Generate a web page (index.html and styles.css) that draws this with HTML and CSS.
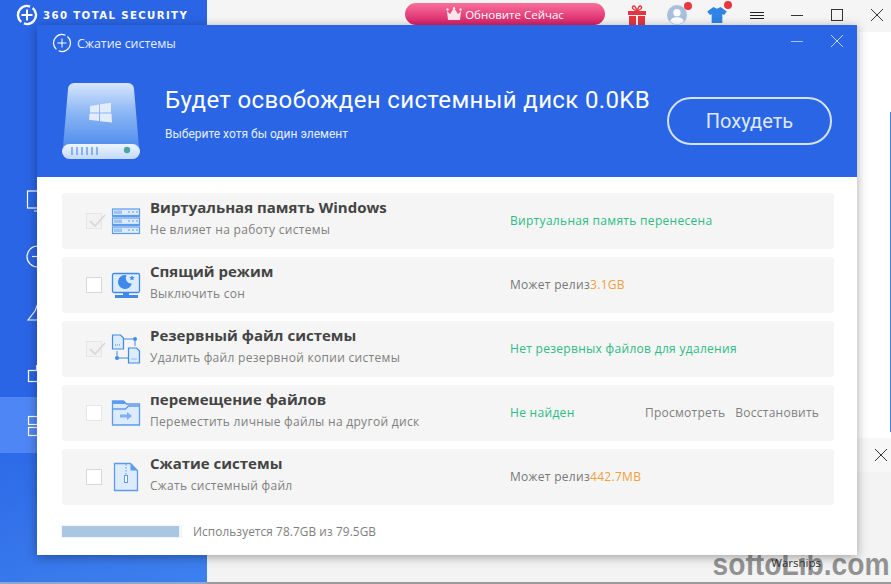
FILE: index.html
```html
<!DOCTYPE html>
<html lang="ru">
<head>
<meta charset="utf-8">
<title>360 Total Security</title>
<link rel="stylesheet" href="styles.css">
</head>
<body>
<div class="app">
  <aside class="side">
    <div class="brand">
      <svg class="brand-logo" width="24" height="24" viewBox="0 0 24 24"><circle cx="12" cy="12" r="9" fill="none" stroke="#fff" stroke-width="2.400" stroke-dasharray="25 3 25 3" transform="rotate(-50 12 12)"/><path d="M12 6.500v11M6.500 12h11" stroke="#fff" stroke-width="2"/></svg>
      <span class="brand-name">360 TOTAL SECURITY</span>
    </div>
    <nav class="nav">
      <div class="nav-item"><svg width="30" height="30" viewBox="0 0 30 30" fill="none" stroke="#fff" stroke-width="1.200"><rect x="1.500" y="3" width="24" height="17"/><path d="M13 20v3M8 23h12"/></svg></div>
      <div class="nav-item"><svg width="30" height="30" viewBox="0 0 30 30" fill="none" stroke="#fff" stroke-width="1.200"><circle cx="11.500" cy="12.500" r="10.500"/><path d="M6 12.500h8"/></svg></div>
      <div class="nav-item"><svg width="30" height="30" viewBox="0 0 30 30" fill="none" stroke="#fff" stroke-width="1.200"><path d="M2 20l7-9 3-8h6l3 8 4 9zM2 20h24"/></svg></div>
      <div class="nav-item"><svg width="30" height="30" viewBox="0 0 30 30" fill="none" stroke="#fff" stroke-width="1.200"><rect x="2.500" y="14.500" width="22" height="11"/><path d="M10.500 14.500V9.500h9v5"/></svg></div>
      <div class="nav-item active"><svg width="30" height="30" viewBox="0 0 30 30" fill="none" stroke="#fff" stroke-width="1.200"><rect x="2.500" y="4.500" width="9" height="8"/><rect x="2.500" y="15.500" width="9" height="8"/><rect x="14.500" y="4.500" width="9" height="8"/><rect x="14.500" y="15.500" width="9" height="8"/></svg></div>
    </nav>
  </aside>
  <main class="content">
    <header class="topbar">
      <div class="upgrade"><svg width="16" height="14" viewBox="0 0 16 14"><path d="M1 4l3 3 4-6 4 6 3-3-1 9H2z" fill="#ffe6ec"/><circle cx="1.500" cy="2.500" r="1.200" fill="#ffe6ec"/><circle cx="14.500" cy="2.500" r="1.200" fill="#ffe6ec"/><circle cx="8" cy="1.200" r="1.200" fill="#ffe6ec"/></svg><span>Обновите Сейчас</span></div>
      <div class="tools">
        <div class="tool"><svg width="18" height="20" viewBox="0 0 18 20"><path d="M0 6h18v4H0zM1 11h7v9H1zM10 11h7v9h-7zM8 6h2v4H8z" fill="#e5363f"/><path d="M9 6C6 5 3 3 5 1.200 7 .2 8 3 9 6c1-3 2-5.800 4-4.800C15 3 12 5 9 6z" fill="none" stroke="#e5363f" stroke-width="1.300"/></svg></div>
        <div class="tool"><div class="tool-wrap"><svg width="20" height="20" viewBox="0 0 22 22"><circle cx="11" cy="11" r="11" fill="#a9c0dc"/><circle cx="11" cy="8.500" r="4" fill="#fff"/><path d="M3.500 18c1-3.500 4-4.500 7.500-4.500s6.500 1 7.500 4.500a10 10 0 0 1-15 0z" fill="#fff"/></svg><i class="dot"></i></div></div>
        <div class="tool"><div class="tool-wrap"><svg width="20" height="16" viewBox="0 0 22 18"><path d="M7 0l4 2 4-2 7 5-3 4-2-1v10H5V8L3 9 0 5z" fill="#2f84e8"/></svg><i class="dot dot-shirt"></i></div></div>
        <div class="tool"><div class="menu-icon"></div></div>
        <div class="tool"><svg width="14" height="14" viewBox="0 0 14 14"><path d="M1 7.500h12" stroke="#333"/></svg></div>
        <div class="tool"><svg width="14" height="14" viewBox="0 0 14 14"><rect x="1.500" y="1.500" width="11" height="11" fill="none" stroke="#333"/></svg></div>
        <div class="tool"><svg width="14" height="14" viewBox="0 0 14 14"><path d="M1 1l12 12M13 1L1 13" stroke="#333"/></svg></div>
      </div>
    </header>
    <div class="page">
      <div class="page-edge"></div>
      <div class="notice"><svg width="14" height="14" viewBox="0 0 14 14"><path d="M1 1l12 12M13 1L1 13" stroke="#333"/></svg></div>
      <div class="page-foot"><span class="watermark">softoLib.com</span><span class="warships">Warships</span></div>
    </div>
  </main>

  <section class="dialog">
    <div class="dlg-head">
      <div class="dlg-title">
        <svg width="20" height="20" viewBox="0 0 20 20"><circle cx="10" cy="10" r="8.500" fill="none" stroke="#fff" stroke-width="1.200" stroke-dasharray="24 2.700 24 2.700" transform="rotate(-50 10 10)"/><path d="M10 5.500v9M5.500 10h9" stroke="#fff"/></svg>
        <span>Сжатие системы</span>
      </div>
      <div class="dlg-win">
        <svg width="14" height="14" viewBox="0 0 14 14"><path d="M1 7.500h12" stroke="#a9c4f5"/></svg>
        <svg width="14" height="14" viewBox="0 0 14 14"><path d="M1 1l12 12M13 1L1 13" stroke="#c4d6f8"/></svg>
      </div>
      <div class="dlg-hero">
        <svg class="disk" width="80" height="78" viewBox="0 0 80 78">
          <defs>
            <linearGradient id="dg" x1="0" y1="0" x2="0" y2="1"><stop offset="0" stop-color="#d6e6fc"/><stop offset=".45" stop-color="#8db7f5"/><stop offset="1" stop-color="#4f8cec"/></linearGradient>
            <linearGradient id="dg2" x1="0" y1="0" x2="0" y2="1"><stop offset="0" stop-color="#eef5fe"/><stop offset="1" stop-color="#c2d9f8"/></linearGradient>
          </defs>
          <path d="M7 6a6 6 0 0 1 6-6h54a6 6 0 0 1 6 6l5 58H2z" fill="url(#dg)"/>
          <rect x="1" y="61" width="78" height="15" rx="7.500" fill="url(#dg2)"/>
          <path d="M29 23l9-1.500v8h-9zM39 21.300l11-1.500v9.800h-11zM28.500 30.500h9.500v7.500l-10-1.200zM39 30.500h11.500l.5 9-12-1.300z" fill="#e2ecfb"/>
          <path d="M11 64v8M16 64v8M21 64v8M26 64v8M31 64v8M36 64v8" stroke="#6f9fe6" stroke-width="1.500"/>
          <circle cx="66" cy="67" r="3.200" fill="#4fa6a0"/>
        </svg>
        <div class="hero-text">
          <h1>Будет освобожден системный диск 0.0KB</h1>
          <p>Выберите хотя бы один элемент</p>
        </div>
        <div class="slim-btn">Похудеть</div>
      </div>
    </div>
    <div class="dlg-body">
      <div class="row">
        <span class="check muted"><svg width="20" height="16" viewBox="0 0 20 16"><path d="M4 8l5 5L19 2" fill="none" stroke="#d9d9d9" stroke-width="1.800"/></svg></span>
        <svg class="row-ico" width="30" height="30" viewBox="0 0 30 30"><g fill="#dcebfd" stroke="#5d9cec" stroke-width="1.200"><rect x="1.500" y="3" width="27" height="6.500"/><rect x="1.500" y="12" width="27" height="6.500"/><rect x="1.500" y="21" width="27" height="6.500"/></g><path d="M1 10.500h28M1 19.500h28" stroke="#5d9cec"/><path d="M4 4.500v3.500M6 4.500v3.500M8 4.500v3.500M10 4.500v3.500M4 13.500v3.500M6 13.500v3.500M8 13.500v3.500M10 13.500v3.500M4 22.500v3.500M6 22.500v3.500M8 22.500v3.500M10 22.500v3.500M17 6h2M21 6h2M25 6h2M17 15h2M21 15h2M25 15h2M17 24h2M21 24h2M25 24h2" stroke="#5d9cec"/></svg>
        <div class="row-text"><b>Виртуальная память Windows</b><small>Не влияет на работу системы</small></div>
        <div class="row-status ok">Виртуальная память перенесена</div>
      </div>
      <div class="row">
        <span class="check"></span>
        <svg class="row-ico" width="30" height="30" viewBox="0 0 30 30"><rect x="1.500" y="3.500" width="27" height="19" rx="1.500" fill="#dcebfd" stroke="#3f8ae8" stroke-width="1.300"/><path d="M15.500 5.200A7 7 0 1 0 20.800 13.500 5.500 5.500 0 0 1 15.500 5.200z" fill="#3f8ae8"/><path d="M21 5.500l.8 1.600 1.700.2-1.200 1.200.3 1.700-1.600-.8-1.600.8.3-1.700-1.200-1.200 1.700-.2z" fill="#3f8ae8"/><rect x="12" y="23" width="6" height="2" fill="#3f8ae8"/><rect x="4" y="25" width="23" height="3" fill="#3f8ae8"/></svg>
        <div class="row-text"><b>Спящий режим</b><small>Выключить сон</small></div>
        <div class="row-status">Может релиз<em>3.1GB</em></div>
      </div>
      <div class="row">
        <span class="check muted"><svg width="20" height="16" viewBox="0 0 20 16"><path d="M4 8l5 5L19 2" fill="none" stroke="#d9d9d9" stroke-width="1.800"/></svg></span>
        <svg class="row-ico" width="30" height="30" viewBox="0 0 30 30"><g fill="#dcebfd" stroke="#3f8ae8" stroke-width="1.200"><path d="M1.500 1h8l3 3v11h-11z"/><path d="M17.500 14h8l3 3v12h-11z"/></g><path d="M4 11h5M20.500 25h5" stroke="#3f8ae8" stroke-dasharray="1 1"/><path d="M13 5h9M6 17v5M24 7v5M8 24h9" stroke="#3f8ae8"/><circle cx="24" cy="5" r="2" fill="#3f8ae8"/><circle cx="6" cy="24" r="2" fill="#3f8ae8"/></svg>
        <div class="row-text"><b>Резервный файл системы</b><small>Удалить файл резервной копии системы</small></div>
        <div class="row-status ok">Нет резервных файлов для удаления</div>
      </div>
      <div class="row">
        <span class="check faint"></span>
        <svg class="row-ico" width="30" height="30" viewBox="0 0 30 30"><path d="M1.500 3h11l3 3h13v21h-27z" fill="#dcebfd" stroke="#5d9cec" stroke-width="1.300"/><path d="M1.500 3h11l3 3H1.500z" fill="#5d9cec"/><path d="M1.500 11h13l3-3h11" fill="none" stroke="#5d9cec" stroke-width="1.300"/><path d="M9 16.500h7v-2.500l5 4-5 4v-2.500H9z" fill="#7fb0f0"/></svg>
        <div class="row-text"><b>перемещение файлов</b><small>Переместить личные файлы на другой диск</small></div>
        <div class="row-status ok short">Не найден</div>
        <div class="row-links"><span>Просмотреть</span><span>Восстановить</span></div>
      </div>
      <div class="row">
        <span class="check"></span>
        <svg class="row-ico" width="30" height="30" viewBox="0 0 30 30"><path d="M3.500 1.500h16l7 7v20h-23z" fill="#dcebfd" stroke="#5d9cec" stroke-width="1.300"/><path d="M19.500 1.500l7 7h-7z" fill="#5d9cec"/><path d="M15 2v11" stroke="#5d9cec" stroke-dasharray="1.500 1.500"/><rect x="13.500" y="13.500" width="3" height="7" fill="#fff" stroke="#5d9cec"/></svg>
        <div class="row-text"><b>Сжатие системы</b><small>Сжать системный файл</small></div>
        <div class="row-status">Может релиз<em>442.7MB</em></div>
      </div>
      <div class="usage">
        <div class="bar"><div class="bar-fill" style="width:98%"></div></div>
        <span>Используется 78.7GB из 79.5GB</span>
      </div>
    </div>
  </section>
</div>
</body>
</html>
```
FILE: styles.css
```css
* { box-sizing: border-box; }
html, body { margin: 0; height: 100%; }
body { font-family: "Open Sans", "Noto Sans", sans-serif; overflow: hidden; background: #fff; }

.app { position: relative; display: flex; width: 891px; height: 584px; overflow: hidden; }

.side { width: 207px; flex: none; background: linear-gradient(160deg, #2a65e6 0%, #2a65e6 62%, #3d80ee 100%); border-bottom: 2px solid #8fa6cf; }
.brand { display: flex; align-items: center; gap: 4px; height: 30px; padding-left: 15px; color: #fff; }
.brand-logo { flex: none; }
.brand-name { font-family: "DejaVu Sans", sans-serif; font-weight: 700; font-size: 10.200px; letter-spacing: 1.370px; white-space: nowrap; }
.nav { padding-top: 143px; }
.nav-item { height: 56px; padding: 15px 0 0 26px; }
.nav-item.active { background: #4f86f5; }

.content { flex: 1; display: flex; flex-direction: column; min-width: 0; }
.topbar { height: 32px; flex: none; background: #f5f5f5; display: flex; align-items: flex-start; }
.upgrade { margin: 3px 0 0 198px; width: 200px; height: 22px; border-radius: 11px; background: linear-gradient(#f8709a, #d81f66); color: #fff; font-size: 11.500px; display: flex; align-items: center; justify-content: center; gap: 3px; flex: none; }
.tools { display: grid; grid-template-columns: repeat(7, 40px); margin-left: 12px; }
.tool { height: 30px; display: flex; align-items: center; justify-content: center; }
.tool-wrap { position: relative; display: flex; }
.dot { position: absolute; right: -5px; top: -3px; width: 8px; height: 8px; border-radius: 50%; background: #e9363f; }
.dot-shirt { top: -6px; }
.menu-icon { width: 14px; height: 7px; border-top: 1px solid #222; border-bottom: 1px solid #222; position: relative; }
.menu-icon::after { content: ""; position: absolute; left: 0; right: 0; top: 2px; border-top: 1px solid #222; }

.page { flex: 1; position: relative; display: flex; flex-direction: column; justify-content: flex-end; }
.page-edge { position: absolute; right: 0; top: 80px; bottom: 152px; width: 1px; background: #3f7fe8; }
.notice { height: 34px; background: #f7f7f7; display: flex; justify-content: flex-end; align-items: center; padding-right: 3px; }
.page-foot { height: 112px; background: #f3f3f3; position: relative; border-bottom: 2px solid #9a9a9a; }
.warships { position: absolute; right: 70px; bottom: 12px; font-size: 11.500px; color: #333; }
.watermark { position: absolute; right: 1px; bottom: -1px; font-family: "Liberation Sans", sans-serif; font-weight: 700; font-size: 31px; transform: scaleX(.91); transform-origin: right center; color: rgba(80, 80, 80, .6); }

.dialog { position: absolute; left: 37px; top: 25px; width: 820px; height: 530px; background: #fff; box-shadow: 0 2px 10px rgba(0, 0, 0, .35); display: flex; flex-direction: column; }
.dlg-head { height: 152px; flex: none; background: #2a65e6; color: #fff; position: relative; }
.dlg-title { display: flex; align-items: center; gap: 5px; padding: 8px 0 0 15px; font-size: 12.400px; color: #e6eefc; }
.dlg-win { position: absolute; right: 13px; top: 9px; display: flex; gap: 26px; }
.dlg-hero { display: flex; align-items: flex-start; padding: 30px 25px 0 24px; }
.disk { flex: none; }
.hero-text { flex: 1; padding-left: 24px; }
.hero-text h1 { margin: 2px 0 0; font-family: Roboto, sans-serif; font-weight: 400; font-size: 24px; line-height: 30px; letter-spacing: .36px; white-space: nowrap; }
.hero-text p { margin: 11px 0 0; font-family: Roboto, sans-serif; font-size: 12px; line-height: 16px; color: #e6eefc; }
.slim-btn { width: 165px; height: 48px; margin-top: 14px; border: 2px solid #d4e2fa; border-radius: 24px; display: flex; align-items: center; justify-content: center; font-family: Roboto, sans-serif; font-size: 20px; color: #dfe9fb; flex: none; }

.dlg-body { flex: 1; padding: 16px 23px 0 25px; display: flex; flex-direction: column; gap: 8px; }
.row { height: 56px; background: #f5f5f5; border-radius: 4px; display: flex; align-items: center; padding-left: 24px; flex: none; }
.check { width: 16px; height: 16px; background: #fff; border: 1px solid #d8d8d8; flex: none; position: relative; }
.check svg { position: absolute; left: -1px; top: -1px; }
.check.muted { background: #f2f2f2; border-color: #e6e6e6; }
.check.faint { border-color: #e6e6e6; }
.row-ico { flex: none; margin-left: 9px; }
.row-text { width: 369px; padding: 0 0 7px 9px; display: flex; flex-direction: column; flex: none; }
.row-text b { font-size: 15px; line-height: 20px; color: #444; font-weight: 700; margin-bottom: 5px; white-space: nowrap; }
.row-text small { font-size: 12px; line-height: 16px; color: #808080; letter-spacing: .3px; white-space: nowrap; }
.row-status { font-size: 12px; letter-spacing: .3px; color: #777; white-space: nowrap; padding-bottom: 2px; }
.row-status.ok { color: #2dbb84; }
.row-status.short { width: 135px; flex: none; }
.row-status em { font-style: normal; color: #f0a040; }
.row-links { display: flex; gap: 10px; font-size: 12px; letter-spacing: .25px; color: #808080; white-space: nowrap; padding-bottom: 2px; }

.usage { display: flex; align-items: center; gap: 11px; margin: 10px 0 0 -1px; font-size: 11.800px; color: #808080; letter-spacing: .1px; }
.bar { width: 121px; height: 13px; background: #f2f6fb; padding: 1px; flex: none; }
.bar-fill { height: 100%; background: #a9c6e3; }
```
